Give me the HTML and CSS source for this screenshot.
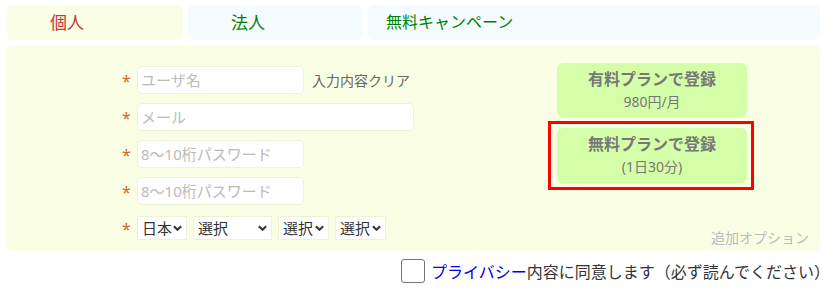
FILE: index.html
```html
<!DOCTYPE html>
<html lang="ja">
<head>
  <meta charset="UTF-8" />
  <meta name="viewport" content="width=device-width, initial-scale=1.0"/>
  <title>会員登録</title>
  <link rel="stylesheet" href="styles.css">
</head>
<body>

<nav class="tabs">
  <div class="tab tab-person">個人</div>
  <div class="tab tab-corp">法人</div>
  <div class="tab tab-free">無料キャンペーン</div>
</nav>

<section class="panel">
  <div class="form">
    <div class="row">
      <span class="req">*</span>
      <input type="text" class="field short" placeholder="ユーザ名" />
      <span class="clear">入力内容クリア</span>
    </div>
    <div class="row">
      <span class="req">*</span>
      <input type="text" class="field long" placeholder="メール" />
    </div>
    <div class="row">
      <span class="req">*</span>
      <input type="password" class="field short" placeholder="8～10桁パスワード" />
    </div>
    <div class="row">
      <span class="req">*</span>
      <input type="password" class="field short" placeholder="8～10桁パスワード" />
    </div>
    <div class="row selects">
      <span class="req">*</span>
      <div class="sel sel-country">
        <select><option>日本</option></select>
        <svg viewBox="0 0 10 6"><path d="M1 1l4 4 4-4" /></svg>
      </div>
      <div class="sel sel-wide">
        <select><option>選択</option></select>
        <svg viewBox="0 0 10 6"><path d="M1 1l4 4 4-4" /></svg>
      </div>
      <div class="sel">
        <select><option>選択</option></select>
        <svg viewBox="0 0 10 6"><path d="M1 1l4 4 4-4" /></svg>
      </div>
      <div class="sel">
        <select><option>選択</option></select>
        <svg viewBox="0 0 10 6"><path d="M1 1l4 4 4-4" /></svg>
      </div>
    </div>
  </div>

  <div class="plans">
    <button class="plan plan-paid">
      <strong>有料プランで登録</strong>
      <span>980円/月</span>
    </button>
    <div class="highlight">
      <button class="plan">
        <strong>無料プランで登録</strong>
        <span>(1日30分)</span>
      </button>
    </div>
  </div>

  <div class="note">追加オプション</div>
</section>

<div class="agree">
  <input type="checkbox" class="check" />
  <span><a href="#" class="link">プライバシー</a>内容に同意します（必ず読んでください）</span>
</div>

</body>
</html>
```

FILE: styles.css
```css
body { margin: 0; padding: 5px 15px 0 6px; font-family: "Noto Sans", "Noto Sans CJK JP", sans-serif; color: #333; }

.tabs { display: flex; gap: 5px; }
.tab { height: 35px; line-height: 35px; border-radius: 6px; font-size: 16px; box-sizing: border-box; }
.tab-person { width: 176px; margin-left: 1px; padding-left: 43px; background: #fafee5; color: #c8323c; font-size: 17px; }
.tab-corp { width: 175px; padding-left: 43px; background: #f5fbff; color: #008000; font-size: 17px; }
.tab-free { flex: 1; padding-left: 18px; background: #f5fbff; color: #008000; }

.panel {
  margin-top: 5px; height: 206px; box-sizing: border-box; background: #fafee5; border-radius: 6px;
  display: grid; grid-template-columns: 1fr 206px 66px; grid-template-rows: 1fr auto;
}

.form { grid-row: 1 / 3; padding: 21px 0 0 116px; display: flex; flex-direction: column; gap: 9px; }
.row { display: flex; align-items: center; height: 28px; }
.row.selects { height: 24px; margin-top: 2px; gap: 6px; }
.req { width: 15px; color: #d2691e; font-size: 16px; line-height: 1; padding-top: 2px; }
.row.selects .req { margin-right: -6px; }

.field {
  height: 28px; box-sizing: border-box; border: 1px solid #eef3d6; border-radius: 5px; background: #fff;
  padding: 0 3px; font: inherit; font-size: 15px; color: #333; outline: none;
}
.field::placeholder { color: #bbb; }
.short { width: 167px; }
.long { width: 277px; }
.clear { margin-left: 8px; font-size: 14px; color: #666; }

.sel { position: relative; width: 51px; height: 24px; }
.sel-country { width: 50px; }
.sel-wide { width: 79px; }
.sel select {
  appearance: none; width: 100%; height: 24px; border: 1px solid #eef3d6; border-radius: 0; background: #fff;
  padding: 0 0 0 4px; font: inherit; font-size: 15px; color: #333;
}
.sel svg { position: absolute; right: 5px; top: 9px; width: 9px; height: 6px; fill: none; stroke: #333; stroke-width: 2.2; pointer-events: none; }

.plans { padding-top: 18px; display: flex; flex-direction: column; gap: 4px; }
.plan {
  display: flex; flex-direction: column; align-items: center; justify-content: center; gap: 5px;
  width: 190px; height: 55px; border: none; border-radius: 6px; background: #d4ffa8; color: #777; font-family: inherit; padding: 0;
  line-height: 1.2;
}
.plan strong { font-size: 16px; }
.plan span { font-size: 14px; }
.plan-paid { height: 54px; margin: 0 9px; }
.highlight { border: 3px solid #ff0000; padding: 4px 6px; }

.note { grid-column: 2 / 4; grid-row: 2; justify-self: end; margin: 0 11px 3px 0; font-size: 14px; line-height: 20px; color: #bbb; }

.agree { display: flex; justify-content: flex-end; align-items: center; gap: 6px; margin: 8px -10px 0 0; font-size: 16px; color: #333; }
.check { appearance: none; margin: 0; width: 24px; height: 24px; border: 1.5px solid #767676; border-radius: 3px; background: #fff; }
.link { color: #0000ee; text-decoration: none; }
```
